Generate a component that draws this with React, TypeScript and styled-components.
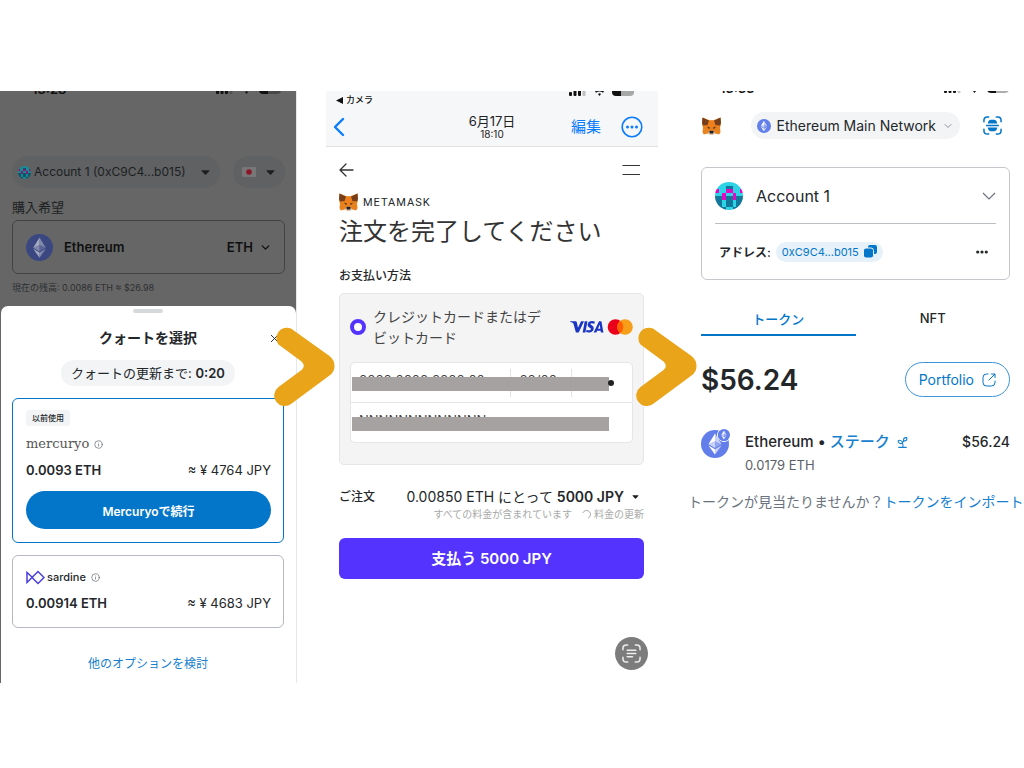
import React from "react";
import styled, { createGlobalStyle } from "styled-components";
import { ChevronDown, Info, Sprout, X } from "lucide-react";

const latin = `Inter, "Noto Sans CJK JP", sans-serif`;

const Global = createGlobalStyle`
  *, *::before, *::after { box-sizing: border-box; }
  body { margin: 0; background: #fff; color: #24272a; font-family: ${latin}; }
  button { font: inherit; color: inherit; background: none; border: 0; padding: 0; cursor: pointer; }
  h1, h2, p { margin: 0; font-weight: 400; }
  b { font-weight: 600; }
  a { color: #1680cf; text-decoration: none; }
  svg { display: block; flex: none; }
`;

const Page = styled.main`
  display: grid;
  grid-template-columns: 296fr 332fr 336fr;
  gap: 30px;
  padding: 91px 0 85px;
  overflow: hidden;
`;

const Screen = styled.section`
  position: relative;
  min-width: 0;
  min-height: 592px;
  display: flex;
  flex-direction: column;
`;

const Row = styled.div<{ $gap?: number; $between?: boolean }>`
  display: flex;
  align-items: center;
  gap: ${(p) => p.$gap ?? 0}px;
  justify-content: ${(p) => (p.$between ? "space-between" : "flex-start")};
`;

const ArrowMark = styled.svg`
  position: absolute;
  top: 234px;
  left: -52px;
  z-index: 2;
  pointer-events: none;
`;

const StatusStrip = styled.div<{ $height: number }>`
  height: ${(p) => p.$height}px;
  padding: 0 12px 0 32px;
  display: flex;
  justify-content: space-between;
  align-items: flex-end;
  overflow: hidden;
  color: #111;
`;

const Clock = styled.span`
  font-size: 13px;
  line-height: 10px;
  font-weight: 600;
`;

/* ---------- Quote screen ---------- */

const QuoteScreen = styled(Screen)`
  background: #666;
  box-shadow: 1px 0 0 #e6e7e9;
`;

const Dimmed = styled.div`
  padding: 62px 11px 11px 12px;
  display: flex;
  flex-direction: column;
  color: #1c1f22;
`;

const DimPill = styled.button<{ $wide?: boolean }>`
  height: 32px;
  padding: 0 10px 0 ${(p) => (p.$wide ? 6 : 9)}px;
  border-radius: 16px;
  background: #606162;
  display: flex;
  align-items: center;
  justify-content: space-between;
  gap: 4px;
  flex: ${(p) => (p.$wide ? "1 1 auto" : "0 0 52px")};
  font-size: 12px;
  line-height: 18px;
  white-space: nowrap;
`;

const FieldLabel = styled.p`
  margin-top: 10px;
  font-size: 13px;
  line-height: 18px;
`;

const AssetButton = styled.button`
  margin-top: 4px;
  height: 54px;
  padding: 0 12px 0 13px;
  border: 1px solid #414345;
  border-radius: 6px;
  display: flex;
  align-items: center;
  gap: 11px;
  font-size: 13px;
  font-weight: 600;
  color: #0f1011;
`;

const Push = styled.span`
  margin-left: auto;
`;

const AssetCode = styled.span`
  margin-left: auto;
  display: flex;
  align-items: center;
  gap: 6px;
`;

const Balance = styled.p`
  margin-top: 7px;
  font-size: 9px;
  line-height: 14px;
  color: #2c2f32;
`;

const Sheet = styled.div`
  flex: 1;
  margin-left: 1px;
  padding: 3px 12px 8px 11px;
  border-radius: 7px 7px 0 0;
  background: #fff;
  display: flex;
  flex-direction: column;
  align-items: stretch;
`;

const Handle = styled.span`
  align-self: center;
  width: 30px;
  height: 4px;
  border-radius: 2px;
  background: #d6d9dc;
`;

const SheetHead = styled.div`
  margin-top: 15px;
  display: grid;
  grid-template-columns: 16px 1fr 16px;
  align-items: center;
`;

const SheetTitle = styled.h2`
  grid-column: 2;
  text-align: center;
  font-size: 14px;
  line-height: 20px;
  font-weight: 700;
`;

const Timer = styled.p`
  align-self: center;
  margin-top: 12px;
  padding: 0 10px;
  border-radius: 13px;
  background: #f2f4f6;
  font-size: 13px;
  line-height: 26px;
  white-space: nowrap;
`;

const Quote = styled.article<{ $active?: boolean }>`
  margin-top: 12px;
  padding: ${(p) => (p.$active ? "11px 12px 13px 13px" : "12px 12px 15px 13px")};
  border: 1px solid ${(p) => (p.$active ? "#0376c9" : "#b4b8bf")};
  border-radius: 6px;
`;

const Tag = styled.span`
  display: inline-block;
  padding: 0 6px;
  border-radius: 3px;
  background: #f2f4f6;
  font-size: 8px;
  line-height: 16px;
  font-weight: 500;
  vertical-align: top;
`;

const Mercuryo = styled.span`
  font-family: "DejaVu Serif", serif;
  font-size: 13px;
  line-height: 18px;
  color: #555;
`;

const Sardine = styled.span`
  font-size: 11px;
  line-height: 18px;
  font-weight: 500;
  margin-right: 3px;
`;

const QuoteLine = styled(Row)<{ $top: number }>`
  margin-top: ${(p) => p.$top}px;
  font-size: 13px;
  line-height: 18px;
`;

const ContinueButton = styled.button`
  margin-top: 12px;
  width: 100%;
  height: 38px;
  border-radius: 19px;
  background: #0376c9;
  color: #fff;
  font-size: 12px;
  font-weight: 600;
`;

const MoreLink = styled.a`
  margin-top: 27px;
  text-align: center;
  font-size: 12px;
  line-height: 18px;
`;

/* ---------- Payment screen ---------- */

const PhotoBar = styled.header`
  height: 56px;
  padding: 0 15px 0 7px;
  background: #f6f7f8;
  border-bottom: 1px solid #dfe0e2;
  overflow: hidden;
`;

const StatusRow = styled.div`
  height: 18px;
  padding: 0 6px 0 3px;
  display: flex;
  justify-content: space-between;
  align-items: flex-start;
`;

const BackToApp = styled(Row)`
  color: #111;
  font-size: 9px;
  line-height: 18px;
  font-weight: 500;
`;

const PhotoNav = styled.div`
  margin-top: 3px;
  height: 30px;
  display: grid;
  grid-template-columns: 1fr auto 1fr;
  align-items: center;
  color: #0a7cff;
`;

const PhotoDate = styled.div`
  padding-left: 8px;
  text-align: center;
  color: #222;
  font-size: 13px;
  line-height: 15px;
`;

const PhotoTime = styled.div`
  font-size: 10px;
  line-height: 11px;
`;

const NavActions = styled(Row)`
  justify-content: flex-end;
  font-size: 15px;
  line-height: 22px;
`;

const Payment = styled.form`
  padding: 14px 14px 0 13px;
  display: flex;
  flex-direction: column;
`;

const Brand = styled(Row)`
  margin-top: 14px;
  height: 18px;
  font-family: Roboto, sans-serif;
  font-size: 11px;
  letter-spacing: 1px;
`;

const PayTitle = styled.h1`
  margin-top: 4px;
  font-size: 24px;
  line-height: 34px;
  color: #333;
`;

const Caption = styled.h2`
  font-size: 12px;
  line-height: 18px;
  font-weight: 500;
`;

const PaymentMethods = styled.section`
  margin-top: 18px;
`;

const MethodBox = styled.div`
  margin-top: 8px;
  padding: 12px 10px 21px 10px;
  border: 1px solid #e6e6e8;
  border-radius: 5px;
  background: #f4f4f5;
`;

const Method = styled.label`
  display: flex;
  align-items: center;
  gap: 7px;
  font-size: 14px;
  line-height: 21px;
  color: #444;
`;

const MethodName = styled.span`
  flex: 0 1 180px;
`;

const Radio = styled.input`
  appearance: none;
  flex: none;
  margin: 0;
  width: 16px;
  height: 16px;
  border: 4px solid #5533ff;
  border-radius: 50%;
  background: #fff;
`;

const Fields = styled.div`
  margin-top: 14px;
  border: 1px solid #e6e6e8;
  border-radius: 5px;
  background: #fff;
`;

const FieldRow = styled.div<{ $columns: string }>`
  position: relative;
  display: grid;
  grid-template-columns: ${(p) => p.$columns};
  align-items: center;
  height: 39px;

  & + & {
    height: 40px;
    border-top: 1px solid #e6e6e8;
  }
`;

const CardInput = styled.input<{ $line?: boolean }>`
  width: 100%;
  min-width: 0;
  height: 28px;
  padding: 0 8px 6px;
  border: 0;
  border-right: ${(p) => (p.$line ? "1px solid #e2e2e2" : "0")};
  background: none;
  font: 13px/22px ${latin};
  color: #444;
  outline: 0;
`;

const Redaction = styled.span`
  position: absolute;
  left: 1px;
  right: 23px;
  top: 14px;
  height: 14px;
  background: #a5a2a1;
`;

const CardDot = styled.span`
  position: absolute;
  right: 18px;
  top: 17px;
  width: 6px;
  height: 6px;
  border-radius: 50%;
  background: #222;
`;

const OrderRow = styled(Row)`
  margin-top: 22px;
  font-size: 14px;
  line-height: 20px;
  white-space: nowrap;
`;

const Amount = styled.button`
  display: flex;
  align-items: center;
  gap: 8px;
  padding-right: 5px;
`;

const FeeNote = styled(Row)`
  justify-content: flex-end;
  font-size: 10px;
  line-height: 15px;
  color: #a9a9a9;
  white-space: nowrap;
`;

const PayButton = styled.button`
  margin-top: 16px;
  height: 41px;
  border-radius: 6px;
  background: #5533ff;
  color: #fff;
  font-size: 15px;
  line-height: 20px;
  font-weight: 600;
`;

const ScanButton = styled.button`
  margin: auto 10px 13px auto;
  width: 33px;
  height: 33px;
  border-radius: 50%;
  background: #7c7c7c;
  display: grid;
  place-items: center;
`;

/* ---------- Wallet screen ---------- */

const Wallet = styled.div`
  padding: 0 14px 0 13px;
`;

const WalletHead = styled(Row)`
  padding: 0 8px 0 1px;
  margin-top: 19px;
`;

const Network = styled.button`
  margin-left: auto;
  height: 27px;
  padding: 0 6px;
  border-radius: 14px;
  background: #f2f4f6;
  display: flex;
  align-items: center;
  gap: 6px;
  font-size: 14px;
  line-height: 20px;
  white-space: nowrap;
`;

const AccountCard = styled.section`
  margin-top: 28px;
  padding: 0 13px;
  border: 1px solid #c4c7cb;
  border-radius: 6px;
`;

const AccountButton = styled.button`
  width: 100%;
  height: 56px;
  display: flex;
  align-items: center;
  gap: 13px;
  border-bottom: 1px solid #bbc0c5;
  font-size: 16px;
`;

const AddressRow = styled(Row)`
  height: 55px;
  padding: 0 8px 0 4px;
  font-size: 12px;
  font-weight: 600;
`;

const AddressPill = styled.button`
  height: 20px;
  padding: 0 6px;
  border-radius: 10px;
  background: #e6f1fa;
  color: #0376c9;
  display: flex;
  align-items: center;
  gap: 5px;
  font-size: 11px;
  font-weight: 400;
`;

const MenuButton = styled.button`
  display: block;
  margin-left: auto;
`;

const Tabs = styled.div`
  margin-top: 22px;
  display: grid;
  grid-template-columns: 1fr 1fr;
`;

const Tab = styled.button<{ $active?: boolean }>`
  height: 34px;
  border-bottom: 2px solid ${(p) => (p.$active ? "#0376c9" : "transparent")};
  color: ${(p) => (p.$active ? "#0376c9" : "#24272a")};
  font-size: 13px;
  font-weight: 500;
`;

const TotalRow = styled(Row)`
  margin-top: 26px;
`;

const Total = styled.p`
  font-size: 28px;
  line-height: 34px;
  font-weight: 600;
`;

const PortfolioButton = styled.button`
  height: 35px;
  padding: 0 13px;
  border: 1px solid #3d95d8;
  border-radius: 18px;
  color: #0376c9;
  display: flex;
  align-items: center;
  gap: 8px;
  font-size: 14px;
`;

const TokenRow = styled.div`
  margin-top: 33px;
  display: grid;
  grid-template-columns: 44px 1fr auto;
  align-items: start;
  font-size: 15px;
  line-height: 24px;
  font-weight: 500;
`;

const TokenIcon = styled.span`
  position: relative;
  width: 28px;
`;

const TokenBadge = styled.span`
  position: absolute;
  right: -2px;
  top: -2px;
  border: 1px solid #fff;
  border-radius: 50%;
`;

const TokenAmount = styled.p`
  margin-top: 2px;
  font-size: 13px;
  line-height: 18px;
  color: #5b6167;
`;

const TokenValue = styled.span`
  font-size: 14px;
`;

const StakeLink = styled.a`
  display: flex;
  align-items: center;
  gap: 6px;
`;

const ImportLine = styled.p`
  margin-top: 16px;
  font-family: "Noto Sans CJK JP", sans-serif;
  font-size: 14px;
  line-height: 22px;
  color: #6a737d;
  white-space: nowrap;
`;

/* ---------- Drawings ---------- */

const OrangeArrow = () => (
  <ArrowMark width="62" height="82" viewBox="0 0 62 82" fill="none" aria-hidden>
    <path
      d="M17 3.500 55.500 31Q60.500 35 60.500 41T55.500 50.500L17 79A10.500 10.500 0 0 1 4.500 62L27.500 45Q32 41 27.500 36.500L4.500 19.500A10.500 10.500 0 0 1 17 3.500z"
      fill="#eaa41a"
    />
  </ArrowMark>
);

const EthCoin = ({ size, bg = "#627eea", dim = false }: { size: number; bg?: string; dim?: boolean }) => {
  const w = dim ? "#a5abc0" : "#fff";
  return (
    <svg width={size} height={size} viewBox="0 0 32 32" aria-hidden>
      <circle cx="16" cy="16" r="16" fill={bg} />
      <path d="M16 4v8.900l7.500 3.300z" fill={w} opacity=".65" />
      <path d="M16 4 8.500 16.200 16 12.900z" fill={w} />
      <path d="M16 22v6l7.500-10.400z" fill={w} opacity=".65" />
      <path d="M16 28v-6l-7.500-4.400z" fill={w} />
      <path d="m16 20.600 7.500-4.400-7.500-3.300z" fill={w} opacity=".3" />
      <path d="m8.500 16.200 7.500 4.400v-7.700z" fill={w} opacity=".65" />
    </svg>
  );
};

const pixels = ["cccccccc", "cccttccc", "mccmmccm", "ccmccmcc", "ttmttmtt", "ttcttctt", "ttcttctt", "tttccttt"];
const paint: Record<string, string> = { c: "#2fd3e6", t: "#12779a", m: "#e20bc4" };
const dimPaint: Record<string, string> = { c: "#178a96", t: "#105468", m: "#7d1d73" };

const Avatar = ({ size, id, dim = false }: { size: number; id: string; dim?: boolean }) => (
  <svg width={size} height={size} viewBox="0 0 8 8" aria-hidden>
    <clipPath id={id}>
      <circle cx="4" cy="4" r="4" />
    </clipPath>
    <g clipPath={`url(#${id})`} shapeRendering="crispEdges">
      {pixels.map((line, y) =>
        line.split("").map((c, x) => (
          <rect key={`${x}-${y}`} x={x} y={y} width="1" height="1" fill={(dim ? dimPaint : paint)[c]} />
        ))
      )}
    </g>
  </svg>
);

const Fox = () => (
  <svg width="19" height="18" viewBox="0 0 40 38" aria-hidden>
    <path d="M1 1 16 7h8L39 1l1 14-2 7 1 10-3 5-8-2-5 2h-6l-5-2-8 2-3-5 1-10-2-7z" fill="#e8821e" />
    <path d="M1 1 15 8l-3 9-10 1-2-6zM39 1 25 8l3 9 10 1 2-6z" fill="#763e1a" />
    <path d="m15 8-3 9 4 10h8l4-10-3-9z" fill="#ef7f1c" />
    <path d="m10 20 7 2-2 4zM30 20l-7 2 2 4z" fill="#5b3a22" />
    <path d="m12 35 4-6h8l4 6-5 2h-6z" fill="#d7c1b3" />
    <path d="m15 31 2-2h6l2 2-2 4h-6z" fill="#222" />
  </svg>
);

const Caret = ({ width = 9 }: { width?: number }) => (
  <svg width={width} height={width > 7 ? 5 : 4} viewBox="0 0 10 5" aria-hidden>
    <path d="M1 0h8q1 0 .3.700L5.600 4.700q-.6.500-1.200 0L.7.700Q0 0 1 0z" fill="#1c1f22" />
  </svg>
);

const JapanFlag = () => (
  <svg width="14" height="10" viewBox="0 0 14 10" aria-hidden>
    <rect width="14" height="10" rx="1" fill="#777" />
    <circle cx="7" cy="5" r="2.800" fill="#8c1529" />
  </svg>
);

const PhoneStatus = ({ top }: { top: number }) => (
  <svg width="68" height={10 - top} viewBox={`0 ${top} 68 ${10 - top}`} aria-hidden>
    <g fill="#111">
      <rect x="0" y="6" width="3" height="4" rx="1" />
      <rect x="4.500" y="4" width="3" height="6" rx="1" />
      <rect x="9" y="2" width="3" height="8" rx="1" />
      <rect x="13.500" y="0" width="3" height="10" rx="1" opacity=".25" />
      <path d="m30.500 10-1.500-2q1.500-1.500 3 0z" />
      <path d="M26 5.500q4.500-3.500 9 0l-1 1.300q-3.500-2.600-7 0z" />
      <path d="M43-2h9v12h-5q-4 0-4-4z" />
      <path d="M52-2h13v8q0 4-4 4h-9z" opacity=".35" />
    </g>
  </svg>
);

const SardineLogo = () => (
  <svg width="19" height="15" viewBox="0 0 19 15" fill="none" stroke="#4a3fe0" strokeWidth="1.500" aria-hidden>
    <path d="M6.500 7.500 1 2.500v10L12 1.500l6 6-6 6-6-6" />
  </svg>
);

const CardLogos = () => (
  <svg width="63" height="18" viewBox="0 0 63 18" aria-label="VISA, Mastercard" role="img">
    <g fill="#1a34c4">
      <path d="M0 3.200h5.600q1 .1 1.200 1L8 9.800l3-6.600h3L8.700 14.400H5.900L3.400 5.600Q2.500 4.400 0 3.700z" />
      <path d="M14.700 3.200h2.700l-2 11.200h-2.700z" />
      <path d="M24.800 3.500 24.400 5.700q-3.800-1.200-4 .4c0 1 3.400 1.400 3.300 4.400-.2 4.100-4.800 4.600-7.600 3.500l.4-2.300c2.200 1 4.300.8 4.400-.7 0-1.300-3.400-1.500-3.300-4.500.3-3.500 4.200-4.300 7.200-3z" />
      <path fillRule="evenodd" d="M29 3.200h2.400l2 11.200h-2.500l-.3-1.600h-3.500l-.7 1.600h-2.700zM29.700 6.600 28 10.800h2.300z" />
    </g>
    <circle cx="45.500" cy="9" r="7.800" fill="#eb001b" />
    <circle cx="55" cy="9" r="7.800" fill="#f79e1b" />
    <path d="M50.250 2.800a7.800 7.800 0 0 1 0 12.400 7.800 7.800 0 0 1 0-12.400z" fill="#ff5f00" />
  </svg>
);

const ScanFrame = ({ color, children }: { color: string; children: React.ReactNode }) => (
  <svg width="19" height="19" viewBox="0 0 20 20" fill="none" stroke={color} strokeWidth="1.600" strokeLinecap="round" aria-hidden>
    <path d="M1 6V4.500Q1 1 4.500 1H6M14 1h1.500Q19 1 19 4.500V6M19 14v1.500q0 3.500-3.500 3.500H14M6 19H4.500Q1 19 1 15.500V14" />
    {children}
  </svg>
);

const ExternalIcon = () => (
  <svg width="14" height="14" viewBox="0 0 14 14" fill="none" stroke="#0376c9" strokeLinecap="round" strokeLinejoin="round" aria-hidden>
    <path d="M6 1H4.500Q1 1 1 4.500v5Q1 13 4.500 13h5q3.500 0 3.500-3.500V8M7 7l5.700-5.700M9.500 1H13v3.500" />
  </svg>
);

const Dots = () => (
  <svg width="12" height="4" viewBox="0 0 12 4" fill="#24272a" aria-hidden>
    <circle cx="1.700" cy="2" r="1.600" />
    <circle cx="6" cy="2" r="1.600" />
    <circle cx="10.300" cy="2" r="1.600" />
  </svg>
);

const CopyIcon = () => (
  <svg width="13" height="13" viewBox="0 0 13 13" aria-hidden>
    <rect x="4" y="0" width="9" height="9" rx="2" fill="#0376c9" />
    <rect x="-.5" y="3" width="10" height="10" rx="2.500" fill="#0376c9" stroke="#e6f1fa" />
  </svg>
);

/* ---------- Screens ---------- */

const Quotes = () => (
  <QuoteScreen>
    <StatusStrip $height={3}>
      <Clock>13:28</Clock>
      <PhoneStatus top={0} />
    </StatusStrip>
    <Dimmed>
      <Row $gap={13}>
        <DimPill $wide>
          <Row $gap={3}>
            <Avatar size={13} id="avatar-small" dim />
            Account 1 (0xC9C4...b015)
          </Row>
          <Caret />
        </DimPill>
        <DimPill aria-label="日本">
          <JapanFlag />
          <Caret />
        </DimPill>
      </Row>
      <FieldLabel>購入希望</FieldLabel>
      <AssetButton>
        <EthCoin size={27} bg="#3a4781" dim />
        Ethereum
        <AssetCode>
          ETH
          <ChevronDown size={13} strokeWidth={2.5} />
        </AssetCode>
      </AssetButton>
      <Balance>現在の残高: 0.0086 ETH ≈ $26.98</Balance>
    </Dimmed>
    <Sheet>
      <Handle />
      <SheetHead>
        <SheetTitle>クォートを選択</SheetTitle>
        <button aria-label="閉じる">
          <X size={13} strokeWidth={1.75} />
        </button>
      </SheetHead>
      <Timer>
        クォートの更新まで: <b>0:20</b>
      </Timer>
      <Quote $active>
        <Tag>以前使用</Tag>
        <QuoteLine $top={5} $gap={5}>
          <Mercuryo>mercuryo</Mercuryo>
          <Info size={9} color="#6a737d" />
        </QuoteLine>
        <QuoteLine $top={8} $between>
          <b>0.0093 ETH</b>
          <span>≈ ¥ 4764 JPY</span>
        </QuoteLine>
        <ContinueButton>Mercuryoで続行</ContinueButton>
      </Quote>
      <Quote>
        <QuoteLine $top={0} $gap={2}>
          <SardineLogo />
          <Sardine>sardine</Sardine>
          <Info size={9} color="#6a737d" />
        </QuoteLine>
        <QuoteLine $top={8} $between>
          <b>0.00914 ETH</b>
          <span>≈ ¥ 4683 JPY</span>
        </QuoteLine>
      </Quote>
      <MoreLink href="#options">他のオプションを検討</MoreLink>
    </Sheet>
  </QuoteScreen>
);

const Checkout = () => (
  <Screen>
    <OrangeArrow />
    <PhotoBar>
      <StatusRow>
        <BackToApp $gap={3}>
          <svg width="7" height="7" viewBox="0 0 7 7" aria-hidden>
            <path d="M0 3.500 7 0v7z" fill="#111" />
          </svg>
          カメラ
        </BackToApp>
        <PhoneStatus top={5} />
      </StatusRow>
      <PhotoNav>
        <button aria-label="戻る">
          <svg width="12" height="20" viewBox="0 0 12 20" fill="none" stroke="#0a7cff" strokeWidth="2.400" strokeLinecap="round" strokeLinejoin="round" aria-hidden>
            <path d="M10 2 2 10l8 8" />
          </svg>
        </button>
        <PhotoDate>
          6月17日
          <PhotoTime>18:10</PhotoTime>
        </PhotoDate>
        <NavActions $gap={20}>
          <button>編集</button>
          <button aria-label="その他">
            <svg width="22" height="22" viewBox="0 0 22 22" aria-hidden>
              <circle cx="11" cy="11" r="9.800" fill="none" stroke="#0a7cff" strokeWidth="1.600" />
              <g fill="#0a7cff">
                <circle cx="6.500" cy="11" r="1.500" />
                <circle cx="11" cy="11" r="1.500" />
                <circle cx="15.500" cy="11" r="1.500" />
              </g>
            </svg>
          </button>
        </NavActions>
      </PhotoNav>
    </PhotoBar>
    <Payment onSubmit={(e) => e.preventDefault()}>
      <Row $between>
        <button type="button" aria-label="前へ">
          <svg width="15" height="18" viewBox="0 0 15 18" fill="none" stroke="#333" strokeWidth="1.300" strokeLinecap="round" strokeLinejoin="round" aria-hidden>
            <path d="M14 9H1.500M7 3 1 9l6 6" />
          </svg>
        </button>
        <button type="button" aria-label="メニュー">
          <svg width="22" height="12" viewBox="0 0 22 12" stroke="#333" aria-hidden>
            <path d="M.5 1.500H18M.5 10.500H18" strokeWidth="1.200" />
          </svg>
        </button>
      </Row>
      <Brand $gap={5}>
        <Fox />
        METAMASK
      </Brand>
      <PayTitle>注文を完了してください</PayTitle>
      <PaymentMethods>
        <Caption>お支払い方法</Caption>
        <MethodBox>
          <Method>
            <Radio type="radio" name="method" defaultChecked />
            <MethodName>クレジットカードまたはデビットカード</MethodName>
            <Push>
              <CardLogos />
            </Push>
          </Method>
          <Fields>
            <FieldRow $columns="161fr 61fr 60fr">
              <CardInput $line aria-label="カード番号" defaultValue="0000 0000 0000 00" />
              <CardInput $line aria-label="有効期限" defaultValue="00/00" />
              <CardInput aria-label="セキュリティコード" />
              <Redaction />
              <CardDot />
            </FieldRow>
            <FieldRow $columns="1fr">
              <CardInput aria-label="カード名義" defaultValue="NNNNNNNNNNNNN" />
              <Redaction />
            </FieldRow>
          </Fields>
        </MethodBox>
      </PaymentMethods>
      <OrderRow $between>
        <Caption>ご注文</Caption>
        <Amount type="button">
          <span>
            0.00850 ETH にとって <b>5000 JPY</b>
          </span>
          <Caret width={7} />
        </Amount>
      </OrderRow>
      <FeeNote $gap={10}>
        <span>すべての料金が含まれています</span>
        <Row $gap={3}>
          <svg width="9" height="9" viewBox="0 0 9 9" fill="none" stroke="#a9a9a9" aria-hidden>
            <path d="M.8 3A4 4 0 1 1 6 8.200" />
          </svg>
          料金の更新
        </Row>
      </FeeNote>
      <PayButton>支払う 5000 JPY</PayButton>
    </Payment>
    <ScanButton aria-label="テキストを認識">
      <ScanFrame color="#eee">
        <path d="M5.500 6.500h9M5.500 10h9M5.500 13.500h5.500" />
      </ScanFrame>
    </ScanButton>
  </Screen>
);

const WalletHome = () => (
  <Screen>
    <OrangeArrow />
    <StatusStrip $height={2}>
      <Clock>13:33</Clock>
      <PhoneStatus top={0} />
    </StatusStrip>
    <Wallet>
      <WalletHead $gap={23}>
        <Fox />
        <Network>
          <EthCoin size={14} />
          Ethereum Main Network
          <ChevronDown size={12} strokeWidth={1.5} color="#6a737d" />
        </Network>
        <button aria-label="スキャン">
          <ScanFrame color="#0376c9">
            <path d="M4 10h12" strokeWidth="1.800" />
            <path d="M5 8Q5.500 4 8.500 4h3q3 0 3.500 4zM5 12q.5 4 3.500 4h3q3 0 3.500-4z" fill="#0376c9" stroke="none" />
          </ScanFrame>
        </button>
      </WalletHead>
      <AccountCard>
        <AccountButton>
          <Avatar size={28} id="avatar-large" />
          Account 1
          <Push>
            <svg width="14" height="8" viewBox="0 0 14 8" fill="none" stroke="#6a737d" strokeWidth="1.200" aria-hidden>
              <path d="M1 1l6 6 6-6" />
            </svg>
          </Push>
        </AccountButton>
        <AddressRow $gap={5}>
          アドレス:
          <AddressPill>
            0xC9C4...b015
            <CopyIcon />
          </AddressPill>
          <MenuButton aria-label="アカウントメニュー">
            <Dots />
          </MenuButton>
        </AddressRow>
      </AccountCard>
      <Tabs role="tablist">
        <Tab role="tab" aria-selected $active>
          トークン
        </Tab>
        <Tab role="tab" aria-selected={false}>
          NFT
        </Tab>
      </Tabs>
      <TotalRow $between>
        <Total>$56.24</Total>
        <PortfolioButton>
          Portfolio
          <ExternalIcon />
        </PortfolioButton>
      </TotalRow>
      <TokenRow>
        <TokenIcon>
          <EthCoin size={28} />
          <TokenBadge>
            <EthCoin size={12} />
          </TokenBadge>
        </TokenIcon>
        <div>
          <Row $gap={4}>
            Ethereum •
            <StakeLink href="#stake">
              ステーク
              <Sprout size={13} strokeWidth={2} />
            </StakeLink>
          </Row>
          <TokenAmount>0.0179 ETH</TokenAmount>
        </div>
        <TokenValue>$56.24</TokenValue>
      </TokenRow>
    </Wallet>
    <ImportLine>
      トークンが見当たりませんか？<a href="#import">トークンをインポート</a>
    </ImportLine>
  </Screen>
);

export default function App() {
  return (
    <>
      <Global />
      <Page>
        <Quotes />
        <Checkout />
        <WalletHome />
      </Page>
    </>
  );
}
